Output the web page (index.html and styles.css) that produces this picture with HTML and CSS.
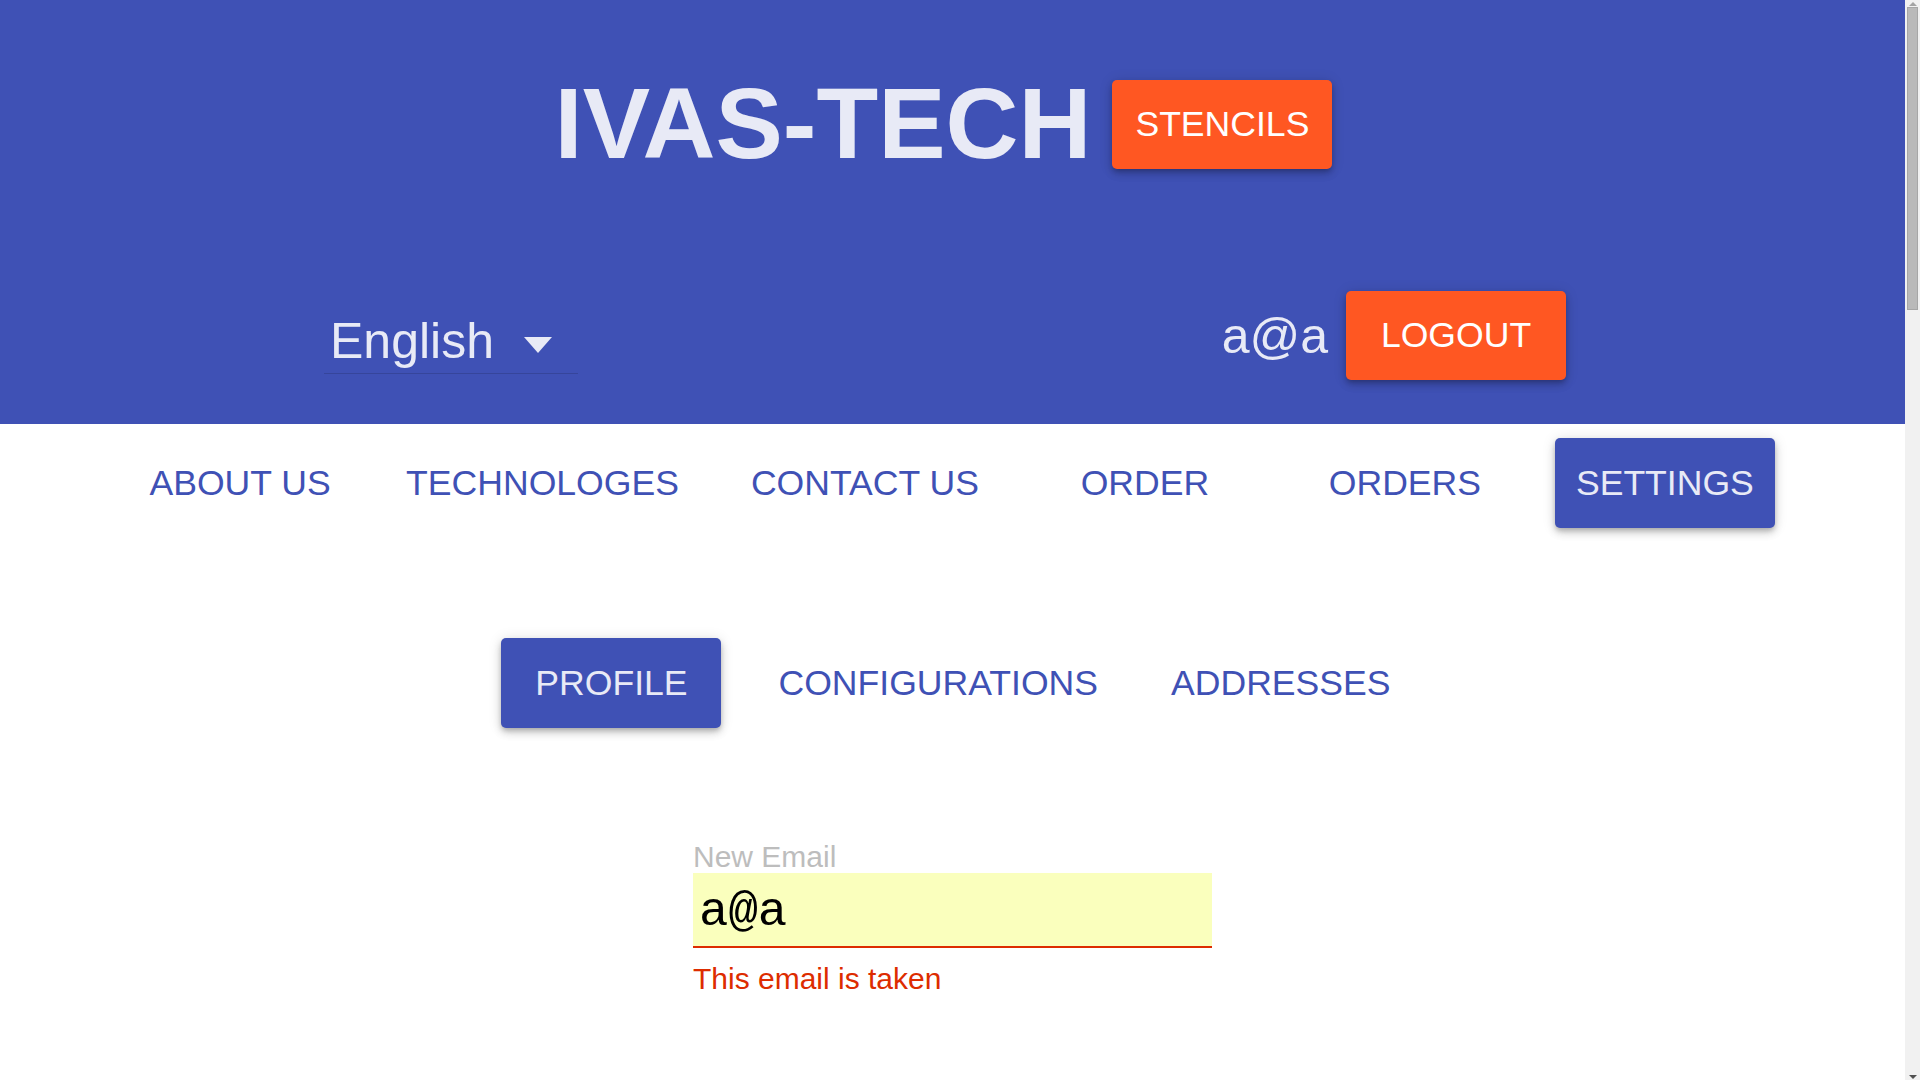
FILE: index.html
```html
<!DOCTYPE html>
<html lang="en">
<head>
<meta charset="utf-8">
<title>IVAS-TECH</title>
<link rel="stylesheet" href="styles.css">
</head>
<body>
<div class="page">
  <header class="header">
    <div class="title-row">
      <h1 class="title">IVAS-TECH</h1>
      <button class="btn btn-accent">STENCILS</button>
    </div>
    <div class="user-row">
      <div class="lang-select">
        <span class="lang-value">English</span>
        <span class="lang-arrow"></span>
      </div>
      <div class="user-box">
        <span class="user-name">a@a</span>
        <button class="btn btn-accent">LOGOUT</button>
      </div>
    </div>
  </header>
  <nav class="main-nav">
    <a class="nav-item">ABOUT US</a>
    <a class="nav-item">TECHNOLOGES</a>
    <a class="nav-item">CONTACT US</a>
    <a class="nav-item">ORDER</a>
    <a class="nav-item">ORDERS</a>
    <a class="nav-item active">SETTINGS</a>
  </nav>
  <nav class="sub-nav">
    <a class="nav-item active">PROFILE</a>
    <a class="nav-item">CONFIGURATIONS</a>
    <a class="nav-item">ADDRESSES</a>
  </nav>
  <main class="content">
    <form class="email-form">
      <label class="field-label" for="email">New Email</label>
      <input class="field-input" id="email" type="text" value="a@a">
      <div class="field-error">This email is taken</div>
    </form>
  </main>
</div>
<div class="scrollbar" aria-hidden="true">
  <div class="sb-button"><span class="sb-arrow-up"></span></div>
  <div class="sb-track"><div class="sb-thumb"></div></div>
  <div class="sb-button"><span class="sb-arrow-down"></span></div>
</div>
</body>
</html>
```
FILE: styles.css
```css
html, body {
  margin: 0;
  padding: 0;
}
body {
  font-family: "Liberation Sans", Arial, sans-serif;
  background: #ffffff;
  display: flex;
  align-items: flex-start;
  height: 1080px;
  overflow: hidden;
}
.page {
  flex: 1;
  min-width: 0;
  height: 1080px;
}
.scrollbar {
  width: 15px;
  height: 1080px;
  background: #f1f1f1;
  display: flex;
  flex-direction: column;
}
.sb-button {
  height: 15px;
  display: flex;
  align-items: center;
  justify-content: center;
}
.sb-arrow-up {
  width: 0;
  height: 0;
  border-left: 4px solid transparent;
  border-right: 4px solid transparent;
  border-bottom: 4px solid #a3a3a3;
  margin-bottom: 8px;
}
.sb-arrow-down {
  width: 0;
  height: 0;
  border-left: 4px solid transparent;
  border-right: 4px solid transparent;
  border-top: 4px solid #505050;
  margin-top: 8px;
}
.sb-track {
  flex: 1;
  padding: 0 2px;
}
.sb-thumb {
  margin-top: -8px;
  height: 303px;
  background: #b9b9b9;
  border: 1px solid #a6a6a6;
  box-sizing: border-box;
}
.header {
  background: #3f51b5;
  height: 424px;
  box-sizing: border-box;
  padding-top: 80px;
}
.title-row {
  display: flex;
  justify-content: center;
  align-items: center;
  gap: 21px;
  padding-right: 18px;
  height: 89px;
}
.title {
  margin: 0 0 4px 0;
  font-size: 101px;
  font-weight: bold;
  line-height: 100px;
  color: #e8eaf6;
}
.btn {
  font-family: "Liberation Sans", Arial, sans-serif;
  font-size: 35.6px;
  border: none;
  border-radius: 5px;
  min-width: 220px;
  height: 89px;
  padding: 0 16px;
  cursor: pointer;
}
.btn-accent {
  background: #ff5722;
  color: #ffffff;
  box-shadow: 0 3px 5px -1px rgba(0,0,0,.2), 0 5px 8px 0 rgba(0,0,0,.14), 0 1px 14px 0 rgba(0,0,0,.12);
}
.user-row {
  display: flex;
  justify-content: space-between;
  align-items: flex-start;
  margin-top: 122px;
  padding: 0 339px 0 324px;
}
.lang-select {
  margin-top: 16px;
  width: 254px;
  height: 67px;
  box-sizing: border-box;
  border-bottom: 1px solid rgba(0,0,0,0.14);
  display: flex;
  align-items: flex-end;
  justify-content: space-between;
  padding: 0 26px 0 6px;
}
.lang-value {
  font-size: 50px;
  line-height: 63px;
  color: #e8eaf6;
}
.lang-arrow {
  width: 0;
  height: 0;
  border-left: 14px solid transparent;
  border-right: 14px solid transparent;
  border-top: 16px solid #e8eaf6;
  margin-bottom: 20px;
}
.user-box {
  display: flex;
  align-items: center;
  gap: 18px;
}
.user-name {
  font-size: 50px;
  color: #e8eaf6;
}
.main-nav, .sub-nav {
  display: flex;
  justify-content: center;
  align-items: center;
}
.main-nav {
  gap: 40px;
  padding-top: 14px;
}
.sub-nav {
  gap: 41px;
  margin-top: 110px;
  padding-left: 3px;
}
.nav-item {
  font-size: 35.6px;
  color: #3f51b5;
  min-width: 220px;
  height: 90px;
  box-sizing: border-box;
  padding: 0 16px;
  display: flex;
  align-items: center;
  justify-content: center;
  border-radius: 5px;
  cursor: pointer;
}
.nav-item.active {
  background: #3f51b5;
  color: #e8eaf6;
  box-shadow: 0 3px 5px -1px rgba(0,0,0,.2), 0 5px 8px 0 rgba(0,0,0,.14), 0 1px 14px 0 rgba(0,0,0,.12);
}
.content {
  display: flex;
  justify-content: center;
  padding-top: 114px;
}
.email-form {
  width: 519px;
  display: flex;
  flex-direction: column;
}
.field-label {
  font-size: 30px;
  color: #bdbdbd;
  line-height: 30px;
}
.field-input {
  margin-top: 1px;
  height: 75px;
  box-sizing: border-box;
  border: none;
  border-bottom: 2px solid #dd2c00;
  background: #faffbd;
  font-family: "Liberation Mono", "DejaVu Sans Mono", monospace;
  font-size: 49px;
  color: #000000;
  padding: 5px 6px 0 6px;
  outline: none;
}
.field-error {
  margin-top: 14px;
  font-size: 30px;
  line-height: 33px;
  color: #dd2c00;
}
```
